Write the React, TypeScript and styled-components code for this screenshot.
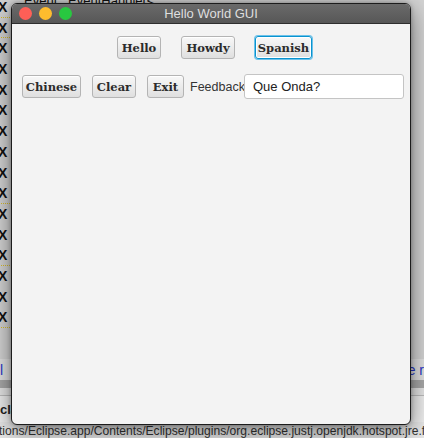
import React from "react";
import styled, { createGlobalStyle } from "styled-components";

const GlobalStyle = createGlobalStyle`
  html, body {
    margin: 0;
    padding: 0;
    width: 424px;
    height: 438px;
    overflow: hidden;
  }
  body {
    font-family: "Liberation Sans", Arial, sans-serif;
  }
`;

const Desktop = styled.div`
  position: relative;
  width: 424px;
  height: 438px;
  overflow: hidden;
  background: #e4e4e4;
  display: flex;
  flex-direction: column;
`;

/* ---- eclipse stuff behind the window ---- */

const EditorArea = styled.div`
  height: 363px;
  background: #d4d4d4;
  display: flex;
  flex-direction: column;
`;

const TopCode = styled.div`
  height: 4px;
  margin-top: -7px;
  padding-left: 24px;
  font: 13px "Liberation Sans", Arial, sans-serif;
  color: #111;
  white-space: nowrap;
`;

const Marker = styled.div<{ $warn?: boolean }>`
  height: 20.7px;
  font: bold 14px/20.7px "Liberation Sans", Arial, sans-serif;
  color: #111;
  margin-left: -2px;
  border-bottom: 1px dotted ${({ $warn }) => ($warn ? "#d8bd2a" : "transparent")};
  width: 12px;
  box-sizing: border-box;
`;

const LinkRow = styled.div`
  height: 22px;
  background: #e2e2e2;
  display: flex;
  justify-content: space-between;
  align-items: center;
  font: 14px "Liberation Sans", Arial, sans-serif;
  color: #2a36c8;
`;

const GrayBar = styled.div`
  height: 8px;
  background: #a9a9a9;
`;

const Divider = styled.div`
  height: 7px;
  background: #e6e6e6;
  border-bottom: 1px solid #bdbdbd;
`;

const ConsoleRow = styled.div`
  height: 26px;
  background: #efefef;
  display: flex;
  align-items: center;
  font: bold 13px "Liberation Sans", Arial, sans-serif;
  color: #222;
`;

const PathRow = styled.div`
  flex: 1;
  background: #e8e8e8;
  font: 12.1px "Liberation Sans", Arial, sans-serif;
  color: #333;
  white-space: nowrap;
  padding-top: 2px;
  margin-left: -1px;
`;

/* ---- the JavaFX window ---- */

const Window = styled.div`
  position: absolute;
  left: 11px;
  top: 3px;
  width: 400px;
  height: 422px;
  box-sizing: border-box;
  border: 1px solid #1c1c1c;
  border-radius: 6px;
  background: #f3f3f3;
  overflow: hidden;
  box-shadow: 0 6px 24px rgba(0, 0, 0, 0.5), 0 0 4px rgba(0, 0, 0, 0.3);
  display: flex;
  flex-direction: column;
`;

const TitleBar = styled.div`
  position: relative;
  height: 20px;
  box-sizing: border-box;
  background: linear-gradient(#6a6a6a, #575757);
  border-bottom: 1px solid #2e2e2e;
  display: flex;
  align-items: center;
  justify-content: center;
`;

const Lights = styled.div`
  position: absolute;
  left: 7px;
  top: 3px;
  display: flex;
  gap: 7px;
`;

const Light = styled.span<{ $c: string }>`
  width: 13px;
  height: 13px;
  border-radius: 50%;
  background: ${({ $c }) => $c};
`;

const Title = styled.span`
  font: 13px "Liberation Sans", Arial, sans-serif;
  color: #dedede;
`;

const Content = styled.div`
  flex: 1;
  display: flex;
  flex-direction: column;
  padding-top: 12px;
  gap: 15px;
`;

const TopRow = styled.div`
  display: flex;
  align-items: center;
  padding-left: 105px;
  gap: 20px;
`;

const BottomRow = styled.div`
  display: flex;
  align-items: center;
  padding-left: 10px;
`;

const Button = styled.button<{ $focused?: boolean; $w: number; $mr?: number }>`
  width: ${({ $w }) => $w}px;
  height: 23px;
  margin-right: ${({ $mr }) => $mr ?? 0}px;
  padding: 0;
  box-sizing: border-box;
  font: bold 11.5px "DejaVu Serif", "Liberation Serif", serif;
  color: #2b2b2b;
  background: linear-gradient(#f8f8f8, #dfdfdf);
  border: 1px solid ${({ $focused }) => ($focused ? "#0a93cf" : "#b4b4b4")};
  border-radius: 3px;
  box-shadow: ${({ $focused }) =>
    $focused
      ? "0 0 0 1px #6cc2ea, inset 0 0 0 1px #ffffff"
      : "inset 0 1px 0 #ffffff"};
  cursor: pointer;
`;

const FieldLabel = styled.span`
  font: 12.5px "Liberation Sans", Arial, sans-serif;
  color: #333;
  margin-left: 6px;
  width: 54px;
  white-space: nowrap;
`;

const TextField = styled.input`
  width: 160px;
  height: 25px;
  box-sizing: border-box;
  border: 1px solid #c4c4c4;
  border-radius: 3px;
  background: #fff;
  padding: 0 8px;
  font: 13px "Liberation Sans", Arial, sans-serif;
  color: #222;
  outline: none;
`;

const warnRows = [0, 1, 9, 12, 15];

export default function App() {
  return (
    <>
      <GlobalStyle />
      <Desktop>
        <EditorArea>
          <TopCode>Event&nbsp;&nbsp;&nbsp;EventHandler&lt;</TopCode>
          {Array.from({ length: 16 }).map((_, i) => (
            <Marker key={i} $warn={warnRows.includes(i)}>
              X
            </Marker>
          ))}
        </EditorArea>
        <LinkRow>
          <span>l</span>
          <span>e r</span>
        </LinkRow>
        <GrayBar />
        <Divider />
        <ConsoleRow>cla</ConsoleRow>
        <PathRow>
          tions/Eclipse.app/Contents/Eclipse/plugins/org.eclipse.justj.openjdk.hotspot.jre.full
        </PathRow>

        <Window>
          <TitleBar>
            <Lights>
              <Light $c="#fe5f57" />
              <Light $c="#febc2e" />
              <Light $c="#28c840" />
            </Lights>
            <Title>Hello World GUI</Title>
          </TitleBar>
          <Content>
            <TopRow>
              <Button $w={44}>Hello</Button>
              <Button $w={54}>Howdy</Button>
              <Button $w={57} $focused>
                Spanish
              </Button>
            </TopRow>
            <BottomRow>
              <Button $w={59} $mr={11}>
                Chinese
              </Button>
              <Button $w={44} $mr={11}>
                Clear
              </Button>
              <Button $w={37}>Exit</Button>
              <FieldLabel>Feedback</FieldLabel>
              <TextField defaultValue="Que Onda?" />
            </BottomRow>
          </Content>
        </Window>
      </Desktop>
    </>
  );
}
